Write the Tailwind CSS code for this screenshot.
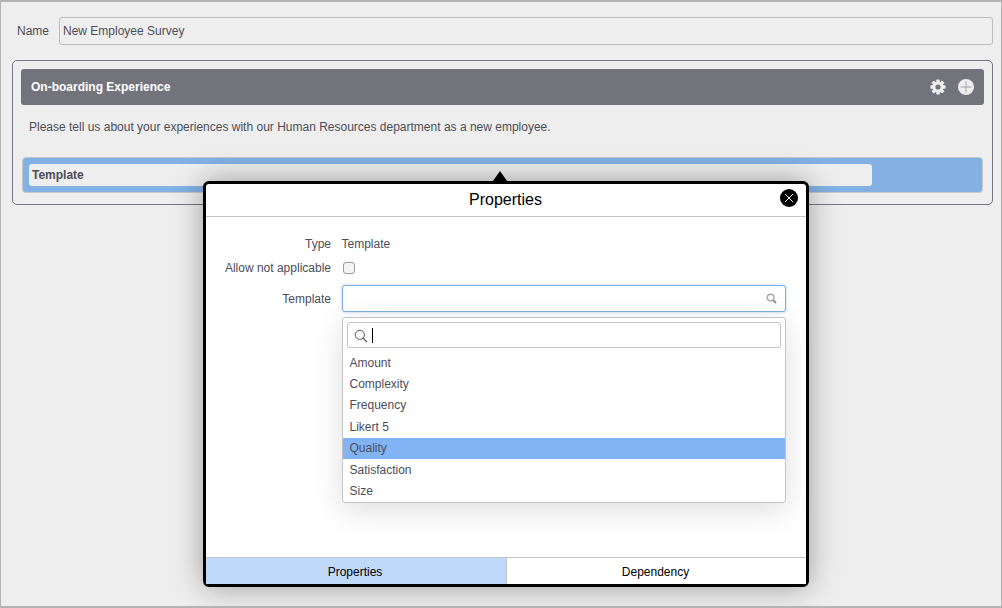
<!DOCTYPE html>
<html>
<head>
<meta charset="utf-8">
<script src="https://cdn.jsdelivr.net/npm/@tailwindcss/browser@4"></script>
</head>
<body class="m-0">
<div class="relative w-[1002px] h-[608px] overflow-hidden bg-[#eeeeee] border border-[#b4b4b4] border-t-2 border-b-2 font-['Liberation_Sans',Arial,sans-serif] text-[12px] text-[#4d4d58]">
  <div class="flex items-center h-[28px] mt-[15px] ml-[16px] mr-[8px]">
    <span class="w-[42px]">Name</span>
    <div class="flex-1 h-[28px] flex items-center px-[3px] border border-[#bcbcbc] rounded-[3px] bg-[#eeeeee]">New Employee Survey</div>
  </div>
  <div class="mt-[15px] ml-[11px] mr-[8px] h-[145px] border border-[#77777f] rounded-[5px] px-[8px] pt-[8px]">
    <div class="h-[36px] bg-[#73737b] rounded-[3px] flex items-center justify-between pl-[10px] pr-[10px] text-white font-bold">
      <span>On-boarding Experience</span>
      <div class="flex items-center gap-[12px]">
        <svg width="16" height="16" viewBox="0 0 16 16"><g fill="#eeeeee"><circle cx="8" cy="8" r="5.6"/><rect x="6.3" y="0.4" width="3.4" height="15.2" rx="0.6"/><rect x="6.3" y="0.4" width="3.4" height="15.2" rx="0.6" transform="rotate(45 8 8)"/><rect x="6.3" y="0.4" width="3.4" height="15.2" rx="0.6" transform="rotate(90 8 8)"/><rect x="6.3" y="0.4" width="3.4" height="15.2" rx="0.6" transform="rotate(135 8 8)"/></g><circle cx="8" cy="8" r="2.6" fill="#73737b"/></svg>
        <svg width="16" height="16" viewBox="0 0 16 16"><circle cx="8" cy="8" r="8" fill="#eeeeee"/><path d="M8 2.5V13.5M2.5 8H13.5" stroke="#a5a5ab" stroke-width="1"/></svg>
      </div>
    </div>
    <p class="mt-[15px] ml-[8px] leading-[14px]">Please tell us about your experiences with our Human Resources department as a new employee.</p>
    <div class="mt-[23px] ml-[1px] mr-[1px] h-[36px] bg-[#83b1e4] border border-[#c8c8cc] rounded-[4px] pl-[6px] pt-[6px]">
      <div class="w-[843px] h-[22px] bg-[#eeeeee] rounded-[3px] flex items-center pl-[3px] font-bold">Template</div>
    </div>
  </div>

  <div class="absolute left-[492px] top-[169px] w-0 h-0 border-x-[7px] border-x-transparent border-b-[10px] border-b-black"></div>
  <div class="absolute left-[202px] top-[179px] w-[606px] h-[406px] bg-white border-[3px] border-black rounded-[6px] shadow-[0_0_30px_rgba(0,0,0,0.35)] flex flex-col">
    <div class="relative h-[33px] shrink-0 border-b border-[#c4c4cc] flex items-center justify-center text-[16px] text-black pr-[1px]">
      Properties
      <div class="absolute left-[574px] top-[5px] w-[18px] h-[18px] rounded-full bg-black flex items-center justify-center">
        <svg width="10" height="10" viewBox="0 0 10 10"><path d="M1 1L9 9M9 1L1 9" stroke="#ffffff" stroke-width="1"/></svg>
      </div>
    </div>
    <div class="flex-1 relative pt-[19px]">
      <div class="flex h-[16px] items-center">
        <span class="w-[125px] text-right">Type</span>
        <span class="ml-[10.5px]">Template</span>
      </div>
      <div class="flex h-[16px] items-center mt-[8px]">
        <span class="w-[125px] text-right">Allow not applicable</span>
        <span class="ml-[12px] w-[12px] h-[12px] border border-[#9a9a9a] rounded-[3px] bg-[#f4f4f4]"></span>
      </div>
      <div class="flex items-center mt-[9px]">
        <span class="w-[125px] text-right">Template</span>
        <div class="ml-[11px] w-[444px] h-[27px] border border-[#7fadea] rounded-[3px] bg-white shadow-[0_0_3px_rgba(100,150,220,0.5)] flex items-center justify-end pr-[8px]">
          <svg width="11" height="11" viewBox="0 0 11 11" fill="none"><circle cx="4.6" cy="4.6" r="3.4" stroke="#a8a8a8" stroke-width="1.4"/><path d="M7.2 7.2L10 10" stroke="#8c8c8c" stroke-width="1.8"/></svg>
        </div>
      </div>
      <div class="absolute left-[136px] top-[100px] w-[444px] h-[186px] bg-white border border-[#c4c4c4] rounded-[3px] shadow-[0_8px_30px_rgba(0,0,0,0.13)]">
        <div class="mx-[4px] mt-[4px] h-[26px] border border-[#c4c4c4] rounded-[3px] flex items-center pl-[6px]">
          <svg class="mt-[2px]" width="14" height="14" viewBox="0 0 14 14" fill="none"><circle cx="5.8" cy="5.8" r="4.6" stroke="#55555f" stroke-width="1"/><path d="M9.2 9.2L13 13" stroke="#55555f" stroke-width="1.2"/></svg>
          <span class="ml-[4px] w-px h-[15px] bg-black"></span>
        </div>
        <ul class="mt-[4px]">
          <li class="h-[21.4px] leading-[23px] pl-[6.5px]">Amount</li>
          <li class="h-[21.4px] leading-[23px] pl-[6.5px]">Complexity</li>
          <li class="h-[21.4px] leading-[21px] pl-[6.5px]">Frequency</li>
          <li class="h-[21.4px] leading-[23px] pl-[6.5px]">Likert 5</li>
          <li class="h-[21.4px] leading-[21.4px] pl-[6.5px] bg-[#82b4f5]">Quality</li>
          <li class="h-[21.4px] leading-[23px] pl-[6.5px]">Satisfaction</li>
          <li class="h-[21.4px] leading-[23px] pl-[6.5px]">Size</li>
        </ul>
      </div>
    </div>
    <div class="h-[27px] shrink-0 border-t border-[#c4c4c4] flex text-black">
      <div class="w-[301px] bg-[#c0d9fb] border-r border-[#c4c4c4] flex items-center justify-center pr-[2px] pt-[1px]">Properties</div>
      <div class="flex-1 bg-white flex items-center justify-center pr-[2px] pt-[1px]">Dependency</div>
    </div>
  </div>
</div>
</body>
</html>
